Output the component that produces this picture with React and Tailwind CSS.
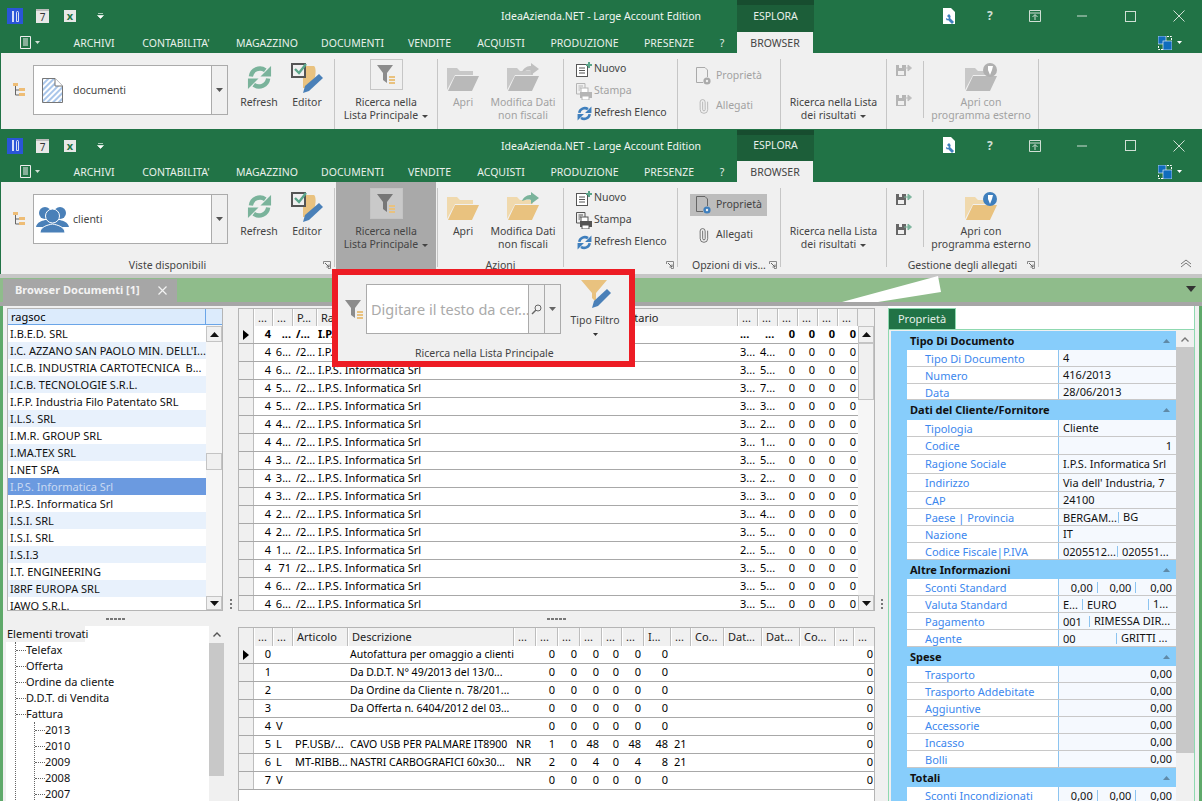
import { Paperclip } from 'lucide-react'

const FOLDER = { back: '#f0d9ad', front: '#e9c27f' }
const FOLDER_OFF = { back: '#c8c8c8', front: '#b9b9b9' }

function TreeIcon() {
  return (
    <svg width="12" height="14" viewBox="0 0 12 14">
      <rect x="0" y="0" width="5" height="3" fill="#eebd76" />
      <path d="M2.5 3V12H6M2.5 7H6" stroke="#666" fill="none" />
      <rect x="6" y="5" width="6" height="3" fill="#eebd76" />
      <rect x="6" y="10" width="6" height="3" fill="#eebd76" />
    </svg>
  )
}

function DocIcon() {
  return (
    <svg width="21" height="25" viewBox="0 0 21 25">
      <defs>
        <pattern id="hatch" width="4" height="4" patternUnits="userSpaceOnUse" patternTransform="rotate(45)">
          <rect width="2" height="4" fill="#a9c6ea" />
        </pattern>
      </defs>
      <path d="M.5.5H13L20.5 8V24.5H.5Z" fill="url(#hatch)" stroke="#777" />
      <path d="M13 .5V8H20.5" fill="#fff" stroke="#777" />
    </svg>
  )
}

function UsersIcon() {
  return (
    <svg width="33" height="27" viewBox="0 0 33 27" fill="#4a80b8">
      <circle cx="9" cy="7" r="6" />
      <circle cx="24" cy="7" r="6" />
      <path d="M0 21C1 16 6 15 9 14L24 14C27 15 32 16 33 21H26V23H7V21Z" />
      <circle cx="16.5" cy="10" r="7" stroke="#fff" />
      <path d="M4 27C4 21 11 19 16.5 18C22 19 29 21 29 27Z" stroke="#fff" />
    </svg>
  )
}

function RefreshIcon({ size = 25, color = '#7ab39b' }) {
  return (
    <svg width={size} height={size} viewBox="0 0 26 26">
      <path d="M4 12A9.5 9.5 0 0 1 19 5.5" stroke={color} strokeWidth="4.5" fill="none" />
      <path d="M25 1V12H14Z" fill={color} />
      <path d="M22 14A9.5 9.5 0 0 1 7 20.5" stroke={color} strokeWidth="4.5" fill="none" />
      <path d="M1 25V14H12Z" fill={color} />
    </svg>
  )
}

function EditorIcon() {
  return (
    <svg width="33" height="31" viewBox="0 0 33 31">
      <path d="M12 4H23C26 6 25 20 18 26H12Z" fill="#e9c27f" />
      <rect x="1" y="2" width="13" height="13" fill="#f0f0f0" stroke="#555" strokeWidth="2" />
      <path d="M4 7L8 11L15 2" stroke="#5aa58a" strokeWidth="2.4" fill="none" />
      <path d="M28 12L32 16L18 29L12 31L14 24Z" fill="#4a80b8" />
    </svg>
  )
}

function FunnelIcon({ off }) {
  return (
    <svg width="19" height="20" viewBox="0 0 19 20">
      <path d="M0 0H16L10 8V18L6 15V8Z" fill={off ? '#8c8c8c' : '#777'} />
      <rect x="12" y="11" width="6" height="2" fill="#e9c27f" />
      <rect x="12" y="14" width="6" height="2" fill="#e9c27f" />
      <rect x="12" y="17" width="6" height="2" fill="#e9c27f" />
    </svg>
  )
}

function FolderIcon({ off, extra }) {
  const c = off ? FOLDER_OFF : FOLDER
  return (
    <svg width="34" height="29" viewBox="0 0 34 29">
      <path d="M1 5H11L14 8H27V12H9L1 27Z" fill={c.back} />
      <path d="M9 13H33L26 28H2Z" fill={c.front} />
      {extra === 'arrow' && (
        <path d="M16 9C18 4 22 3 25 3V0L33 6L25 12V8C22 7 19 8 16 9Z" fill={off ? '#c0c0c0' : '#7ab39b'} />
      )}
      {extra === 'globe' && (
        <>
          <circle cx="26" cy="7" r="7" fill={off ? '#b0b0b0' : '#3f7fbd'} />
          <path d="M24 3H29L28 7L26 12L24 7Z" fill="#fff" />
        </>
      )}
    </svg>
  )
}

function NewIcon() {
  return (
    <svg width="16" height="15" viewBox="0 0 16 15">
      <rect x=".5" y="2.5" width="11" height="12" fill="#fff" stroke="#555" />
      <path d="M3 6H9M3 8.5H9M3 11H9" stroke="#555" />
      <path d="M10 3H16M13 0V6" stroke="#5aa58a" strokeWidth="2" />
    </svg>
  )
}

function PrintIcon({ off }) {
  const c = off ? '#b5b5b5' : '#555'
  return (
    <svg width="16" height="17" viewBox="0 0 16 17">
      <path d="M.5.5H9V5M.5.5V11H4" stroke={c} fill="none" />
      <path d="M2.5 3H7M2.5 5H5M2.5 7H4" stroke={c} />
      <rect x="5" y="5" width="7" height="5" fill="#fff" stroke={c} />
      <rect x="4" y="9" width="12" height="6" fill={c} />
      <rect x="6" y="13" width="7" height="4" fill="#fff" stroke={c} />
    </svg>
  )
}

function PropIcon({ off }) {
  return (
    <svg width="15" height="18" viewBox="0 0 15 18">
      <path d="M.5.5H9L11.5 3V10M.5.5V15.5H7" stroke={off ? '#aaa' : '#666'} fill="none" />
      <circle cx="11" cy="14" r="3.6" fill={off ? '#aaa' : '#3f7fbd'} />
      <circle cx="11" cy="14" r="1.2" fill="#f0f0f0" />
    </svg>
  )
}

function SaveArrow({ off }) {
  const c = off ? '#b5b5b5' : '#666'
  return (
    <svg width="16" height="13" viewBox="0 0 16 13">
      <path d="M0 1H10V12H0Z" fill={c} />
      <rect x="2" y="7" width="6" height="4" fill="#f0f0f0" />
      <rect x="3" y="1" width="3" height="3" fill="#f0f0f0" />
      <path d="M8 4H13M12 1L15.5 4L12 7Z" stroke={off ? '#bdbdbd' : '#7ab39b'} fill={off ? '#bdbdbd' : '#7ab39b'} />
    </svg>
  )
}

function Launcher() {
  return (
    <svg width="8" height="8" viewBox="0 0 8 8" className="absolute right-[3px] top-[5px]">
      <path d="M.5 3V.5H7.5V7.5H5" stroke="#888" fill="none" />
      <path d="M2 2L6 6M6 3.5V6H3.5" stroke="#666" fill="none" />
    </svg>
  )
}

function Caret() {
  return <span className="inline-block ml-[4px] align-middle w-0 h-0 border-l-[3px] border-r-[3px] border-t-[3px] border-l-transparent border-r-transparent border-t-[#444]" />
}

function Sep({ full }) {
  return <div className={`w-px shrink-0 mt-[6px] bg-[#c6c6c6] ${full ? 'mb-[7px]' : ''}`} />
}

function BigBtn({ w, off, icon, lines, caret }) {
  return (
    <div className={`${w} shrink-0 flex flex-col items-center pt-[6px] ${off ? 'text-[#a2a2a2]' : 'text-[#444]'}`}>
      <div className="h-[37px] flex items-center justify-center">{icon}</div>
      {lines.map((l, i) => (
        <div key={l} className="leading-[13px] whitespace-nowrap">
          {l}
          {caret && i === lines.length - 1 && <Caret />}
        </div>
      ))}
    </div>
  )
}

function SmallBtn({ off, icon, text, iw = 'w-[20px]' }) {
  return (
    <div className={`h-[22px] flex items-center ${off ? 'text-[#a2a2a2]' : 'text-[#444]'}`}>
      <div className={`${iw} flex justify-center`}>{icon}</div>
      <span className="whitespace-nowrap">{text}</span>
    </div>
  )
}

function Group({ w, label, launcher, full, children }) {
  return (
    <>
      <div className={`${w} shrink-0 flex flex-col`}>
        <div className="flex-1 flex min-h-0">{children}</div>
        {full && (
          <div className="relative h-[18px] text-center text-[#444] leading-[18px] whitespace-nowrap">
            {label}
            {launcher && <Launcher />}
          </div>
        )}
      </div>
      <Sep full={full} />
    </>
  )
}

const TABS = [
  ['w-[68px]', 'ARCHIVI'],
  ['w-[96px]', "CONTABILITA'"],
  ['w-[86px]', 'MAGAZZINO'],
  ['w-[85px]', 'DOCUMENTI'],
  ['w-[69px]', 'VENDITE'],
  ['w-[74px]', 'ACQUISTI'],
  ['w-[93px]', 'PRODUZIONE'],
  ['w-[76px]', 'PRESENZE'],
  ['w-[30px]', '?'],
]

function TitleBar({ second }) {
  return (
    <div className={`relative flex items-center ${second ? 'h-[31px]' : 'h-[32px]'} text-white`}>
      <div className="w-[737px] flex items-center pl-[7px] shrink-0">
        <div className="w-[16px] h-[16px] bg-[#2a55d8] flex items-center justify-center gap-[2px]">
          <div className="w-[2px] h-[11px] bg-white/80" />
          <div className="w-[3px] h-[11px] border border-white/80 rounded-t-sm" />
        </div>
        <div className="ml-[13px] w-[13px] h-[14px] bg-[#e8e8e8] border-t-2 border-[#bbb] text-[10px] leading-[12px] text-center text-[#333]">7</div>
        <div className="ml-[15px] w-[12px] h-[12px] bg-[#e8e8e8] text-[11px] leading-[12px] font-bold text-center text-[#217346]">x</div>
        <svg width="7" height="6" viewBox="0 0 7 6" className="ml-[21px]">
          <path d="M1 .5H6M.5 2.5H6.5L3.5 5.5Z" stroke="#fff" fill="#fff" strokeWidth=".6" />
        </svg>
      </div>
      <div className="absolute left-0 w-[1202px] text-center pointer-events-none leading-[14px] text-[#f0f6f2] text-[10.5px]">IdeaAzienda.NET - Large Account Edition</div>
      <div className="w-[77px] h-full shrink-0 bg-[#1c5e39] border-t-[5px] border-[#174d2f] flex items-center justify-center text-[#e8f0ea] text-[10.5px] pb-[4px]">ESPLORA</div>
      <div className="flex-1 flex items-center pl-[129px]">
        <svg width="13" height="17" viewBox="0 0 13 17">
          <path d="M0 0H8L12 4V16H0Z" fill="#fff" />
          <path d="M6 6C8 8 8 9 7 10L11 14L9 16L5 12C4 13 3 12 3 10L5 11L6 10L4 8Z" fill="#3f7fbd" />
        </svg>
        <span className="ml-[31px] text-[12px] font-bold text-[#d0dfd5] w-[8px]">?</span>
        <svg width="12" height="12" viewBox="0 0 12 12" className="ml-[34px]">
          <path d="M.5.5H11.5V11.5H.5ZM.5 3H11.5M6 10V5M3.5 7L6 4.5L8.5 7" stroke="#d0dfd5" fill="none" />
        </svg>
        <svg width="10" height="2" viewBox="0 0 10 2" className="ml-[36px]"><path d="M0 1H10" stroke="#d0dfd5" /></svg>
        <svg width="11" height="11" viewBox="0 0 11 11" className="ml-[38px]"><rect x=".5" y=".5" width="10" height="10" stroke="#d0dfd5" fill="none" /></svg>
        <svg width="12" height="12" viewBox="0 0 12 12" className="ml-[37px]"><path d="M.5.5L11.5 11.5M11.5.5L.5 11.5" stroke="#d0dfd5" /></svg>
      </div>
    </div>
  )
}

function TabBar() {
  return (
    <div className="flex items-center h-[21px] text-[#e8f0ea] text-[10.5px]">
      <div className="w-[60px] shrink-0 flex items-center pl-[20px]">
        <svg width="13" height="13" viewBox="0 0 13 13">
          <path d="M.5.5H10.5V12.5H.5Z" fill="#217346" stroke="#eee" />
          <path d="M3 3H8M3 5H8M3 7H8M3 9H8" stroke="#eee" />
        </svg>
        <svg width="5" height="3" viewBox="0 0 5 3" className="ml-[2px]"><path d="M0 0H5L2.5 3Z" fill="#d0dfd5" /></svg>
      </div>
      {TABS.map(([w, t]) => (
        <div key={t} className={`${w} shrink-0 text-center whitespace-nowrap pt-[3px]`}>{t}</div>
      ))}
      <div className="w-[76px] h-full shrink-0 bg-[#f0f0f0] text-[#444] flex items-center justify-center pt-[3px]">BROWSER</div>
      <div className="flex-1 flex items-center justify-end pr-[20px]">
        <svg width="14" height="14" viewBox="0 0 14 14">
          <path d="M9 .5H13.5V5M5 13.5H.5V9" stroke="#fff" fill="none" strokeDasharray="2 1" />
          <rect x="0" y="0" width="8" height="8" fill="#0f6cbd" stroke="#fff" strokeWidth=".6" />
          <rect x="5" y="5" width="9" height="9" fill="#0f6cbd" stroke="#fff" strokeWidth=".6" />
        </svg>
        <svg width="5" height="3" viewBox="0 0 5 3" className="ml-[5px]"><path d="M0 0H5L2.5 3Z" fill="#fff" /></svg>
      </div>
    </div>
  )
}

// first ribbon has everything greyed out, the second one is the live one
function Ribbon({ second }) {
  const off = !second
  return (
    <div className={`flex ml-px bg-[#f0f0f0] text-[#444] text-[10.5px] ${second ? 'h-[92px]' : 'h-[76px]'}`}>
      <Group w="w-[333px]" label="Viste disponibili" launcher full={second}>
        <div className="w-[32px] shrink-0 pl-[12px] pt-[30px]"><TreeIcon /></div>
        <div className="w-[195px] h-[50px] mt-[12px] shrink-0 flex border border-[#ababab]">
          <div className="flex-1 bg-white flex items-center">
            {second ? (
              <div className="flex items-center pl-[2px]"><UsersIcon /><span className="ml-[4px] pt-px">clienti</span></div>
            ) : (
              <div className="flex items-center pl-[8px]"><DocIcon /><span className="ml-[10px] pt-px">documenti</span></div>
            )}
          </div>
          <div className="w-[16px] border-l border-[#ababab] flex items-center justify-center">
            <svg width="7" height="4" viewBox="0 0 7 4"><path d="M0 0H7L3.5 4Z" fill="#555" /></svg>
          </div>
        </div>
        <BigBtn w="w-[62px]" icon={<RefreshIcon />} lines={['Refresh']} />
        <BigBtn w="w-[34px]" icon={<EditorIcon />} lines={['Editor']} />
      </Group>
      <Group w="w-[102px]" full={second}>
        <div className={`w-full flex flex-col items-center pt-[6px] ${second ? 'bg-[#a9a9a9] mx-px mb-[-13px]' : ''}`}>
          <div className={`w-[33px] h-[31px] flex items-center justify-center border mb-[6px] ${second ? 'bg-[#c9c9c9] border-[#c4c4c4]' : 'border-[#c6c6c6]'}`}>
            <FunnelIcon off={off} />
          </div>
          <div className="leading-[13px] whitespace-nowrap">Ricerca nella</div>
          <div className="leading-[13px] whitespace-nowrap">Lista Principale<Caret /></div>
        </div>
      </Group>
      <Group w="w-[125px]" label="Azioni" full={second}>
        <BigBtn w="w-[50px]" off={off} icon={<FolderIcon off={off} />} lines={['Apri']} />
        <BigBtn w="w-[70px]" off={off} icon={<FolderIcon off={off} extra="arrow" />} lines={['Modifica Dati', 'non fiscali']} />
      </Group>
      <Group w="w-[113px]" label="" launcher full={second}>
        <div className="pl-[10px] pt-[5px]">
          <SmallBtn icon={<NewIcon />} text="Nuovo" />
          <SmallBtn off={off} icon={<PrintIcon off={off} />} text="Stampa" />
          <SmallBtn icon={<RefreshIcon size={15} color="#3f7fbd" />} text="Refresh Elenco" />
        </div>
      </Group>
      <Group w="w-[102px]" label="Opzioni di vis..." launcher full={second}>
        <div className="pl-[12px] pt-[12px] w-full">
          <div className={`w-[77px] ${second ? 'bg-[#bdbdbd]' : ''}`}>
            <SmallBtn iw="w-[26px]" off={off} icon={<PropIcon off={off} />} text="Proprietà" />
          </div>
          <div className="mt-[8px]">
            <SmallBtn iw="w-[26px]" off={off} icon={<Paperclip size={15} strokeWidth={1.2} color={off ? '#aaa' : '#555'} className="-rotate-45" />} text="Allegati" />
          </div>
        </div>
      </Group>
      <Group w="w-[105px]" full={second}>
        <div className="w-full flex flex-col items-center pt-[43px]">
          <div className="leading-[13px] whitespace-nowrap">Ricerca nella Lista</div>
          <div className="leading-[13px] whitespace-nowrap">dei risultati<Caret /></div>
        </div>
      </Group>
      <Group w="w-[151px]" label="Gestione degli allegati" launcher full={second}>
        <div className="w-[36px] shrink-0 flex flex-col items-center pt-[11px] gap-[17px] pr-[3px]">
          <SaveArrow off={off} />
          <SaveArrow off={off} />
        </div>
        <div className="w-px h-[57px] mt-[8px] bg-[#c6c6c6] shrink-0" />
        <BigBtn w="w-[114px]" off={off} icon={<FolderIcon off={off} extra="globe" />} lines={['Apri con', 'programma esterno']} />
      </Group>
      <div className="flex-1 flex items-end justify-end pr-[10px] pb-[6px]">
        {second && (
          <svg width="12" height="9" viewBox="0 0 12 9"><path d="M1 5L6 1L11 5M1 8L6 4L11 8" stroke="#777" fill="none" /></svg>
        )}
      </div>
    </div>
  )
}

function Chrome({ second }) {
  return (
    <div className="bg-[#217346]">
      <TitleBar second={second} />
      <TabBar />
      <Ribbon second={second} />
    </div>
  )
}

function SearchPopup() {
  return (
    <div className="absolute left-[332px] top-[269px] w-[303px] h-[98px] border-[6px] border-[#ed1c24] bg-[#f0f0f0] flex flex-col text-[#444] text-[10.5px]">
      <div className="flex h-[71px]">
        <div className="pl-[7px] pt-[25px] w-[28px]"><FunnelIcon off /></div>
        <div className="w-[195px] h-[50px] mt-[9px] flex border border-[#ababab]">
          <div className="flex-1 bg-white text-[#aaaaaa] text-[14.5px] leading-[48px] pl-[4px] whitespace-nowrap overflow-hidden">Digitare il testo da cer...</div>
          <div className="w-[16px] border-l border-[#ababab] flex items-center justify-center">
            <svg width="11" height="11" viewBox="0 0 11 11"><circle cx="7" cy="4" r="3" stroke="#666" fill="none" /><path d="M5 6L1 10" stroke="#666" strokeWidth="1.5" /></svg>
          </div>
          <div className="w-[16px] border-l border-[#ababab] flex items-center justify-center">
            <svg width="7" height="4" viewBox="0 0 7 4"><path d="M0 0H7L3.5 4Z" fill="#666" /></svg>
          </div>
        </div>
        <div className="flex-1 flex flex-col items-center pt-[5px] leading-[13px]">
          <svg width="30" height="28" viewBox="0 0 30 28" className="mb-[6px] ml-[2px]">
            <path d="M0 0H26L15 13V22L11 18V13Z" fill="#e9c27f" />
            <path d="M26 9L30 13L17 26L11 28L13 21Z" fill="#4a80b8" />
          </svg>
          <div className="whitespace-nowrap">Tipo Filtro</div>
          <svg width="5" height="3" viewBox="0 0 5 3" className="mt-[6px]"><path d="M0 0H5L2.5 3Z" fill="#333" /></svg>
        </div>
      </div>
      <div className="flex-1 pl-[77px] leading-[14px] whitespace-nowrap">Ricerca nella Lista Principale</div>
    </div>
  )
}

function ScrollBtn({ up, h = 'h-[16px]' }) {
  return (
    <div className={`${h} shrink-0 bg-[#f0f0f0] border border-[#c4c4c4] flex items-center justify-center`}>
      <svg width="9" height="5" viewBox="0 0 9 5">
        <path d={up ? 'M0 5H9L4.5 0Z' : 'M0 0H9L4.5 5Z'} fill="#111" />
      </svg>
    </div>
  )
}

const RAGSOC = [
  'I.B.E.D. SRL', "I.C. AZZANO SAN PAOLO MIN. DELL'I...", 'I.C.B. INDUSTRIA CARTOTECNICA  B...', 'I.C.B. TECNOLOGIE S.R.L.',
  'I.F.P. Industria Filo Patentato SRL', 'I.L.S. SRL', 'I.M.R. GROUP SRL', 'I.MA.TEX SRL', 'I.NET SPA',
  'I.P.S. Informatica Srl', 'I.P.S. Informatica Srl', 'I.S.I. SRL', 'I.S.I. SRL', 'I.S.I.3', 'I.T. ENGINEERING',
  'I8RF EUROPA SRL', 'IAWO S.R.L.',
]

function ListPanel() {
  return (
    <div className="ml-[4px] mt-[2px] w-[216px] h-[303px] border border-[#b5b5b5] bg-white flex flex-col overflow-hidden">
      <div className="h-[16px] shrink-0 bg-[#dcebfc] border-b border-[#6aa5e8] flex">
        <div className="w-[198px] border-r border-[#6aa5e8] pl-[3px] leading-[15px] text-black">ragsoc</div>
      </div>
      <div className="flex flex-1 min-h-0">
        <div className="w-[198px] shrink-0 overflow-hidden">
          {RAGSOC.map((r, i) => (
            <div key={i} className={`h-[17px] pl-[2px] leading-[17px] whitespace-pre overflow-hidden ${i === 9 ? 'bg-[#6b9ae0] text-[#c9d9f2]' : i % 2 ? 'bg-[#e8f1fc] text-[#111]' : 'bg-white text-[#111]'}`}>{r}</div>
          ))}
        </div>
        <div className="flex-1 flex flex-col bg-[#f6f6f6]">
          <div className="mt-[1px]"><ScrollBtn up /></div>
          <div className="h-[111px]" />
          <div className="h-[17px] bg-[#f0f0f0] border border-[#c4c4c4]" />
          <div className="flex-1" />
          <ScrollBtn h="h-[14px]" />
        </div>
      </div>
    </div>
  )
}

function TreeRow({ children }) {
  return (
    <div className="h-[16px] flex items-center">
      <div className="w-[10px] border-t border-dotted border-[#666]" />
      <span className="leading-[16px] text-[#111]">{children}</span>
    </div>
  )
}

function TreePanel() {
  return (
    <div className="ml-[3px] flex h-[175px] overflow-hidden">
      <div className="w-[203px] bg-white shrink-0">
        <div className="w-[79px] h-[16px] bg-[#f0f0f0] pl-px leading-[16px] text-[#111] whitespace-nowrap">Elementi trovati</div>
        <div className="ml-[9px] border-l border-dotted border-[#666]">
          <TreeRow>Telefax</TreeRow>
          <TreeRow>Offerta</TreeRow>
          <TreeRow>Ordine da cliente</TreeRow>
          <TreeRow>D.D.T. di Vendita</TreeRow>
          <TreeRow>Fattura</TreeRow>
          <div className="ml-[18px] border-l border-dotted border-[#666]">
            {['2013', '2010', '2009', '2008', '2007'].map(y => <TreeRow key={y}>{y}</TreeRow>)}
          </div>
        </div>
      </div>
      <div className="w-[15px] shrink-0 flex flex-col">
        <div className="h-[17px] flex items-center justify-center">
          <svg width="8" height="5" viewBox="0 0 8 5"><path d="M.5 4.5L4 1L7.5 4.5" stroke="#555" strokeWidth="1.4" fill="none" /></svg>
        </div>
        <div className="h-[133px] bg-[#c8c8c8]" />
      </div>
    </div>
  )
}

const TOP_COLS = 'grid-cols-[15px_19px_20px_24px_274px_147px_20px_20px_20px_20px_20px_20px]'
const BOT_COLS = 'grid-cols-[15px_19px_20px_55px_166px_22px_22px_22px_22px_20px_22px_27px_20px_33px_38px_38px_35px_19px_21px]'

function HeadCell({ children }) {
  return (
    <div className="h-full bg-[#f0f0f0] border-l border-white border-r border-r-[#bdbdbd] pl-[3px] leading-[18px] overflow-hidden whitespace-nowrap text-[#222]">{children}</div>
  )
}

function Pointer() {
  return (
    <div className="h-full bg-[#f0f0f0] border-r border-[#bdbdbd] flex items-center justify-center">
      <svg width="6" height="10" viewBox="0 0 6 10"><path d="M0 0L6 5L0 10Z" fill="#000" /></svg>
    </div>
  )
}

const TOP_ROWS = [
  ['6...', '4...'], ['6...', '5...'], ['5...', '7...'], ['5...', '3...'], ['4...', '2...'], ['4...', '1...'], ['3...', '5...'],
  ['3...', '2...'], ['3...', '3...'], ['2...', '4...'], ['2...', '5...'], ['1...', '5...'], ['71', '5...'], ['6...', '5...'], ['6...', '5...'],
]

function TopRow({ row, i }) {
  const col3 = i === 11 ? '2...' : '3...'
  return (
    <div className={`grid ${TOP_COLS} h-[18px] border-b border-[#a8a8a8] text-black leading-[16px] whitespace-nowrap`}>
      <div className="bg-[#f0f0f0] border-r border-[#bdbdbd]" />
      <div className="text-right pr-[2px]">4</div>
      <div className="text-right pr-[2px]">{row[0]}</div>
      <div className="pl-[3px]">/2...</div>
      <div className="pl-[1px]">I.P.S. Informatica Srl</div>
      <div />
      <div className="pl-[2px]">{col3}</div>
      <div className="pl-[2px]">{row[1]}</div>
      <div className="text-right pr-[3px]">0</div>
      <div className="text-right pr-[3px]">0</div>
      <div className="text-right pr-[3px]">0</div>
      <div className="text-right pr-[2px]">0</div>
    </div>
  )
}

function TopGrid() {
  return (
    <div className="mt-[2px] h-[303px] border border-[#b5b5b5] bg-white overflow-hidden">
      <div className="flex h-[17px]">
        <div className={`grid ${TOP_COLS} shrink-0`}>
          <div className="bg-[#f0f0f0] border-r border-[#bdbdbd]" />
          <HeadCell>...</HeadCell>
          <HeadCell>...</HeadCell>
          <HeadCell>P...</HeadCell>
          <HeadCell>Ragione Sociale</HeadCell>
          <HeadCell>Destinatario</HeadCell>
          <HeadCell>...</HeadCell>
          <HeadCell>...</HeadCell>
          <HeadCell>...</HeadCell>
          <HeadCell>...</HeadCell>
          <HeadCell>...</HeadCell>
          <HeadCell>...</HeadCell>
        </div>
        <div className="flex-1 bg-[#f0f0f0]" />
      </div>
      <div className="flex h-[285px]">
        <div className="shrink-0 overflow-hidden">
          <div className={`grid ${TOP_COLS} h-[18px] border-b border-[#a8a8a8] text-black font-bold leading-[16px] whitespace-nowrap`}>
            <Pointer />
            <div className="text-right pr-[2px]">4</div>
            <div className="text-right pr-[2px]">...</div>
            <div className="pl-[3px]">/...</div>
            <div className="pl-[1px]">I.P.S. Informatica Srl</div>
            <div />
            <div className="pl-[2px]">...</div>
            <div className="pl-[7px]">...</div>
            <div className="text-right pr-[3px]">0</div>
            <div className="text-right pr-[3px]">0</div>
            <div className="text-right pr-[3px]">0</div>
            <div className="text-right pr-[2px]">0</div>
          </div>
          {TOP_ROWS.map((r, i) => <TopRow key={i} row={r} i={i} />)}
        </div>
        <div className="flex-1 flex flex-col bg-[#f6f6f6]">
          <ScrollBtn up h="h-[17px]" />
          <div className="h-[57px] bg-[#f0f0f0] border border-[#c4c4c4]" />
          <div className="flex-1" />
          <ScrollBtn h="h-[16px]" />
        </div>
      </div>
    </div>
  )
}

const BOT_ROWS = [
  ['0', '', '', 'Autofattura per omaggio a clienti', '', '0', '0', '0', '0', '0', '0', ''],
  ['1', '', '', 'Da D.D.T. N° 49/2013 del 13/0...', '', '0', '0', '0', '0', '0', '0', ''],
  ['2', '', '', 'Da Ordine da Cliente n. 78/201...', '', '0', '0', '0', '0', '0', '0', ''],
  ['3', '', '', 'Da Offerta n. 6404/2012 del 03...', '', '0', '0', '0', '0', '0', '0', ''],
  ['4', 'V', '', '', '', '0', '0', '0', '0', '0', '0', ''],
  ['5', 'L', 'PF.USB/...', 'CAVO USB PER PALMARE IT8900', 'NR', '1', '0', '48', '0', '48', '48', '21'],
  ['6', 'L', 'MT-RIBB...', 'NASTRI CARBOGRAFICI 60x30...', 'NR', '2', '0', '4', '0', '4', '8', '21'],
  ['7', 'V', '', '', '', '0', '0', '0', '0', '0', '0', ''],
]

function BottomGrid() {
  return (
    <div className="mt-[1px] h-[174px] border border-b-0 border-[#b5b5b5] bg-white overflow-hidden">
      <div className={`grid ${BOT_COLS} h-[18px]`}>
        <div className="bg-[#f0f0f0] border-r border-[#bdbdbd]" />
        {['...', '...', 'Articolo', 'Descrizione', '...', '...', '...', '...', '...', '...', 'I...', '...', 'Co...', 'Dat...', 'Dat...', 'Co...', '...', '...'].map((h, i) => (
          <HeadCell key={i}>{h}</HeadCell>
        ))}
      </div>
      {BOT_ROWS.map((r, i) => (
        <div key={i} className={`grid ${BOT_COLS} h-[18px] border-b border-[#a8a8a8] text-black leading-[16px] whitespace-nowrap`}>
          {i === 0 ? <Pointer /> : <div className="bg-[#f0f0f0] border-r border-[#bdbdbd]" />}
          <div className="text-right pr-[2px]">{r[0]}</div>
          <div className="pl-[3px]">{r[1]}</div>
          <div className="pl-[2px] overflow-hidden">{r[2]}</div>
          <div className="pl-[2px] text-[10.5px] overflow-hidden">{r[3]}</div>
          <div className="pl-[2px]">{r[4]}</div>
          <div className="text-right pr-[3px]">{r[5]}</div>
          <div className="text-right pr-[3px]">{r[6]}</div>
          <div className="text-right pr-[3px]">{r[7]}</div>
          <div className="text-right pr-[3px]">{r[8]}</div>
          <div className="text-right pr-[3px]">{r[9]}</div>
          <div className="text-right pr-[3px]">{r[10]}</div>
          <div className="pl-[3px]">{r[11]}</div>
          <div />
          <div />
          <div />
          <div />
          <div />
          <div className="text-right pr-[2px]">0</div>
        </div>
      ))}
    </div>
  )
}

function SectionRow({ title, h = 'h-[20px]' }) {
  return (
    <div className={`${h} bg-[#87cdfb] flex items-center pl-[19px] pr-[6px] font-bold text-[#111]`}>
      <span className="flex-1 leading-[14px]">{title}</span>
      <svg width="7" height="4" viewBox="0 0 7 4"><path d="M0 4H7L3.5 0Z" fill="#5f8aa8" /></svg>
    </div>
  )
}

function Val({ w, right, children, last }) {
  return (
    <div className={`${w} h-[11px] whitespace-nowrap overflow-hidden leading-[11px] flex items-center ${right ? 'justify-end' : ''} ${right && !last ? 'pr-[4px]' : ''} ${last ? '' : 'border-r border-[#8cc4f0]'}`}>{children}</div>
  )
}

function PropRow({ label, h = 'h-[17px]', children }) {
  return (
    <div className={`${h} flex ml-[16px] border-b border-[#c8c8c8] leading-[18px]`}>
      <div className="w-[152px] shrink-0 bg-white pl-[18px] text-[#3c87ee] whitespace-nowrap border-r border-[#8cc4f0]">{label}</div>
      <div className="flex-1 bg-[#f5f9fe] text-[#111] pl-[4px] pr-[4px] whitespace-nowrap overflow-hidden flex items-center gap-[4px]">{children}</div>
    </div>
  )
}

function Triple() {
  return (
    <>
      <Val w="w-[35px]" right>0,00</Val>
      <Val w="w-[35px]" right>0,00</Val>
      <Val w="w-[32px]" right last>0,00</Val>
    </>
  )
}

function Amount() {
  return <div className="w-full text-right">0,00</div>
}

function PropsPanel() {
  return (
    <div className="w-[307px] shrink-0 h-[495px] overflow-hidden">
      <div className="bg-white h-[24px] mt-[-1px] pt-[3px] border-r border-r-[#8fd9b0]">
        <div className="w-[68px] h-[22px] bg-[#217346] border border-[#8fd9b0] border-b-0 text-center text-[#e8f0ea] leading-[20px]">Proprietà</div>
      </div>
      <div className="flex h-full border-t border-x border-[#8fd9b0] pt-[1px] pl-[2px]">
        <div className="w-[285px] shrink-0 bg-[#87cdfb] overflow-hidden">
          <SectionRow title="Tipo Di Documento" h="h-[19px]" />
          <PropRow label="Tipo Di Documento">4</PropRow>
          <PropRow label="Numero">416/2013</PropRow>
          <PropRow label="Data" h="h-[16px]">28/06/2013</PropRow>
          <SectionRow title="Dati del Cliente/Fornitore" />
          <PropRow label="Tipologia">Cliente</PropRow>
          <PropRow label="Codice" h="h-[18px]"><div className="w-full text-right -mr-[2px]">1</div></PropRow>
          <PropRow label="Ragione Sociale" h="h-[19px]">I.P.S. Informatica Srl</PropRow>
          <PropRow label="Indirizzo" h="h-[18px]">Via dell' Industria, 7</PropRow>
          <PropRow label="CAP">24100</PropRow>
          <PropRow label="Paese | Provincia"><Val w="w-[56px]">BERGAM...</Val><span>BG</span></PropRow>
          <PropRow label="Nazione">IT</PropRow>
          <PropRow label="Codice Fiscale|P.IVA"><Val w="w-[55px]">0205512...</Val><Val w="w-[48px]" last>020551...</Val></PropRow>
          <SectionRow title="Altre Informazioni" h="h-[19px]" />
          <PropRow label="Sconti Standard"><Triple /></PropRow>
          <PropRow label="Valuta Standard"><Val w="w-[20px]">E...</Val><Val w="w-[62px]">EURO</Val><span>1...</span></PropRow>
          <PropRow label="Pagamento"><Val w="w-[27px]">001</Val><span>RIMESSA DIR...</span></PropRow>
          <PropRow label="Agente"><Val w="w-[54px]">00</Val><span>GRITTI ...</span></PropRow>
          <SectionRow title="Spese" h="h-[19px]" />
          <PropRow label="Trasporto"><Amount /></PropRow>
          {['Trasporto Addebitate', 'Aggiuntive', 'Accessorie', 'Incasso', 'Bolli'].map(l => (
            <PropRow key={l} label={l}><Amount /></PropRow>
          ))}
          <SectionRow title="Totali" h="h-[19px]" />
          <PropRow label="Sconti Incondizionati"><Triple /></PropRow>
        </div>
        <div className="w-[18px] shrink-0 flex flex-col">
          <div className="h-[16px] bg-[#f0f0f0] flex items-center justify-center">
            <svg width="8" height="5" viewBox="0 0 8 5"><path d="M.5 4.5L4 1L7.5 4.5" stroke="#777" strokeWidth="1.4" fill="none" /></svg>
          </div>
          <div className="h-[406px] bg-[#c8c8c8]" />
          <div className="flex-1 bg-[#f0f0f0]" />
        </div>
      </div>
    </div>
  )
}

function HDots() {
  return (
    <div className="h-[15px] flex items-center justify-center gap-px">
      {[0, 1, 2, 3, 4].map(i => <div key={i} className="w-[3px] h-[2px] bg-[#777]" />)}
    </div>
  )
}

function VDots() {
  return (
    <div className="flex flex-col gap-[2px] items-center">
      {[0, 1, 2].map(i => <div key={i} className="w-[2px] h-[2px] bg-[#777]" />)}
    </div>
  )
}

export default function App() {
  return (
    <div className="relative w-[1202px] h-[801px] overflow-hidden bg-[#217346] font-['Noto_Sans',sans-serif] text-[11px]">
      <div className="h-[130px]"><Chrome /></div>
      <Chrome second />

      <div className="h-[4px] bg-[#c6c6c6]" />
      <div className="h-[24px] bg-[#8fbc8b] flex items-end pl-[3px]">
        <div className="w-[174px] h-[23px] bg-[#a6a6a6] flex items-center pl-[12px] font-bold text-[#f3f3f3]">
          <span className="flex-1">Browser Documenti [1]</span>
          <svg width="9" height="9" viewBox="0 0 9 9" className="mr-[10px]"><path d="M.5.5L8.5 8.5M8.5.5L.5 8.5" stroke="#f3f3f3" strokeWidth="1.2" /></svg>
        </div>
        <div className="flex-1" />
        <svg width="10" height="6" viewBox="0 0 10 6" className="mr-[6px] mb-[10px]"><path d="M0 0H10L5 6Z" fill="#333" /></svg>
      </div>
      <div className="h-[4px] bg-[#a6a6a6]" />

      <div className="flex h-[495px] bg-[#f0f0f0] border-l-[3px] border-r-[3px] border-[#5fa96a]">
        <div className="w-[224px] shrink-0 flex flex-col">
          <ListPanel />
          <HDots />
          <TreePanel />
        </div>
        <div className="w-[11px] shrink-0 h-[305px] flex items-end justify-center pb-[2px] pr-[3px]"><VDots /></div>
        <div className="w-[637px] shrink-0 flex flex-col">
          <TopGrid />
          <HDots />
          <BottomGrid />
        </div>
        <div className="w-[13px] shrink-0 h-[305px] flex items-end justify-center pb-[2px]"><VDots /></div>
        <PropsPanel />
      </div>

      {/* stray drag ghost over the tab band */}
      <svg width="110" height="32" viewBox="0 0 110 32" className="absolute left-[838px] top-[274px]">
        <path d="M4 28L100 2L103 18L40 28Z" fill="#fff" />
      </svg>
      <SearchPopup />
    </div>
  )
}
